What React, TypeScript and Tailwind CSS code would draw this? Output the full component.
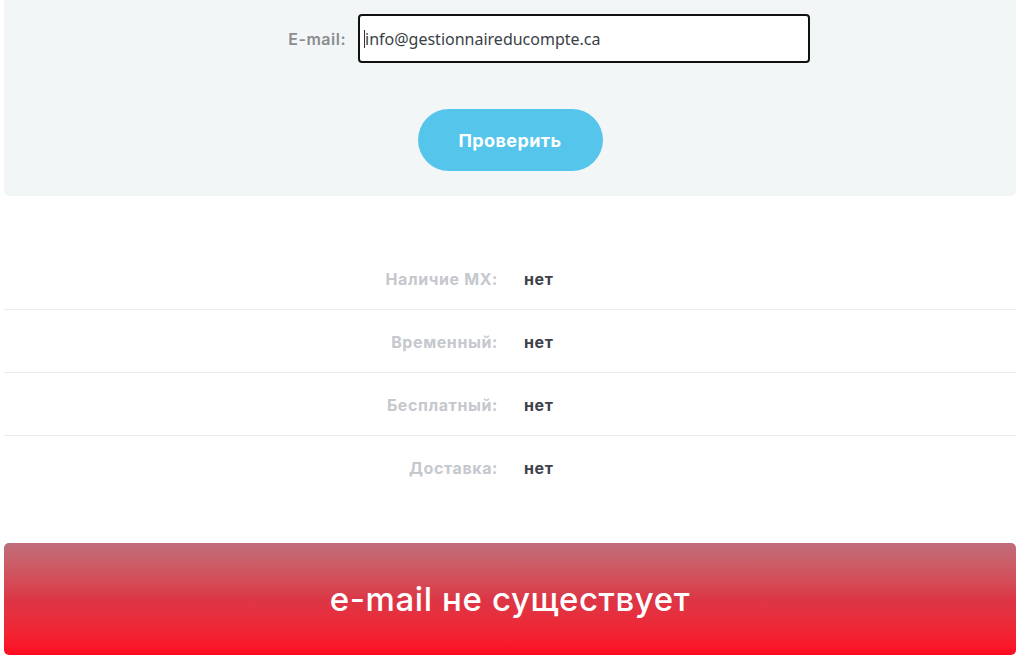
import React from "react";

const rows = [
  { label: "Наличие MX:", value: "нет" },
  { label: "Временный:", value: "нет" },
  { label: "Бесплатный:", value: "нет" },
  { label: "Доставка:", value: "нет" },
];

export default function App() {
  return (
    <div className="w-[1020px] h-[658px] overflow-hidden bg-white px-[4px] font-['Inter',sans-serif]">
      <div className="bg-[#f3f6f7] rounded-b-[5px] pt-[14px] pb-[25px]">
        <div className="flex items-center">
          <div className="w-[342px] text-right text-[16px] tracking-[0.5px] font-semibold text-[#8a8d90]">E-mail:</div>
          <div className="ml-[12px] w-[452px] h-[49px] border-2 border-[#111] rounded-[4px] bg-white flex items-center pl-[4px]">
            <span className="w-px h-[18px] bg-[#333]"></span>
            <span className="text-[16px] text-[#3a3f47] font-['Noto_Sans',sans-serif]">info@gestionnaireducompte.ca</span>
          </div>
        </div>
        <div className="flex justify-center mt-[46px]">
          <button className="w-[185px] h-[62px] rounded-full bg-[#55c5ec] text-white text-[18px] tracking-[0.4px] font-bold">
            Проверить
          </button>
        </div>
      </div>

      <div className="mt-[51px]">
        {rows.map((r, i) => (
          <div
            key={r.label}
            className={`flex items-center h-[63px] pt-[1px] ${i < rows.length - 1 ? "border-b border-[#ebebeb]" : ""}`}
          >
            <div className="w-1/2 pr-[12px] text-right text-[16px] tracking-[0.6px] font-bold text-[#c5c8cc]">{r.label}</div>
            <div className="w-1/2 pl-[14px] text-[16px] tracking-[0.6px] font-bold text-[#3d424a]">{r.value}</div>
          </div>
        ))}
      </div>

      <div className="mt-[44px] h-[112px] rounded-[5px] bg-gradient-to-b from-[#bf6d7a] via-[#dc3646] to-[#ff0820] flex items-center justify-center pt-[2px]">
        <span className="text-white text-[33px] tracking-[0.6px] font-medium">e-mail не существует</span>
      </div>
    </div>
  );
}
